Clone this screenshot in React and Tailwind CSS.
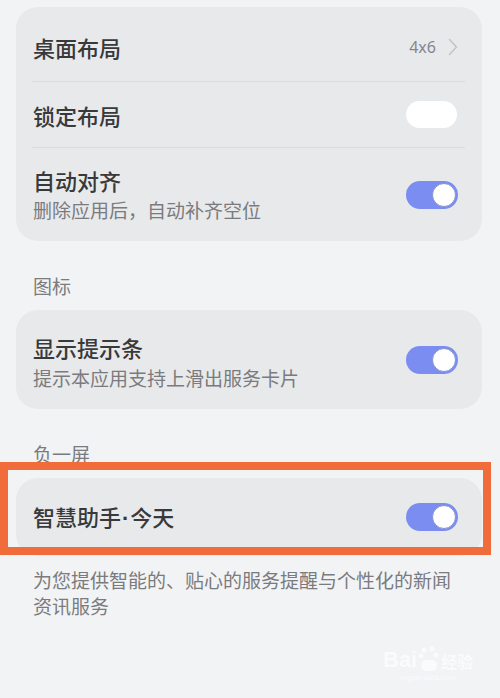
import React from 'react';

const Toggle = ({ on }) => {
    if (!on) {
        return <div className="w-[51px] h-[27px] rounded-full bg-white shrink-0" />;
    }
    return (
        <div className="w-[52px] h-[28px] rounded-full bg-[#7b8df1] flex items-center justify-end pr-[2px] shrink-0">
            <div className="w-[24px] h-[24px] rounded-full bg-white border border-[#8390cf]" />
        </div>
    );
};

const Divider = () => <div className="h-px bg-[#dadbde] ml-[16px] mr-[17px]" />;

const SectionLabel = ({ children }) => (
    <div className="mt-[32px] mb-[11px] px-[17px] text-[19px] leading-[26px] text-[#7a7b7e]">{children}</div>
);

const Title = ({ children }) => (
    <span className="text-[22px] leading-[30px] font-medium text-[#38393b]">{children}</span>
);

const App = () => {
    return (
        <div className="relative w-[500px] h-[698px] overflow-hidden bg-[#f2f3f5] font-['Noto_Sans_CJK_SC','Noto_Sans',sans-serif]">
            <div className="pt-[7px] px-[16px]">
                {/* 桌面 */}
                <div className="w-[466px] rounded-[22px] bg-[#e8e9eb] pt-[6px]">
                    <div className="h-[68px] flex items-center justify-between pl-[17px] pr-[24px]">
                        <Title>桌面布局</Title>
                        <div className="flex items-center gap-[12px]">
                            <span className="text-[16px] text-[#85878b] font-['Noto_Sans',sans-serif]">4x6</span>
                            <svg width="10" height="18" viewBox="0 0 10 18" fill="none">
                                <path d="M1.5 1.5 L8.5 9 L1.5 16.5" stroke="#c2c4c8" strokeWidth="1.6" strokeLinecap="round" strokeLinejoin="round" />
                            </svg>
                        </div>
                    </div>
                    <Divider />
                    <div className="h-[65px] flex items-center justify-between pl-[17px] pr-[25px]">
                        <Title>锁定布局</Title>
                        <Toggle on={false} />
                    </div>
                    <Divider />
                    <div className="h-[93px] flex items-center justify-between pl-[17px] pr-[24px]">
                        <div className="flex flex-col">
                            <Title>自动对齐</Title>
                            <span className="text-[19px] leading-[30px] text-[#7a7b7e]">删除应用后，自动补齐空位</span>
                        </div>
                        <Toggle on />
                    </div>
                </div>

                <SectionLabel>图标</SectionLabel>

                <div className="w-[466px] h-[99px] rounded-[22px] bg-[#e8e9eb] flex items-center justify-between pl-[17px] pr-[24px]">
                    <div className="flex flex-col mt-[6px]">
                        <Title>显示提示条</Title>
                        <span className="text-[19px] leading-[30px] text-[#7a7b7e] mt-[1px]">提示本应用支持上滑出服务卡片</span>
                    </div>
                    <Toggle on />
                </div>

                <SectionLabel>负一屏</SectionLabel>

                <div className="w-[466px] h-[78px] rounded-[22px] bg-[#e8e9eb] flex items-center justify-between pl-[17px] pr-[24px]">
                    <Title>
                        智慧助手<span className="font-['Liberation_Sans',sans-serif] font-bold px-[1px]">·</span>今天
                    </Title>
                    <Toggle on />
                </div>

                <p className="mt-[11px] px-[17px] text-[19px] leading-[26px] text-[#7a7b7e]">
                    为您提供智能的、贴心的服务提醒与个性化的新闻资讯服务
                </p>
            </div>

            {/* annotation box */}
            <div className="absolute left-0 top-[462px] w-[491px] h-[93px] border-[8px] border-[#f06c3a]" />

            {/* watermark */}
            <div className="absolute left-[383px] top-[645px] flex flex-col items-center opacity-70">
                <div className="flex items-end gap-[1px]">
                    <span className="text-[22px] leading-[26px] font-bold text-white font-['Liberation_Sans',sans-serif]">Bai</span>
                    <svg width="22" height="28" viewBox="0 0 22 28">
                        <circle cx="6" cy="5" r="2.5" fill="#ffffff" />
                        <circle cx="14" cy="4" r="2.5" fill="#ffffff" />
                        <circle cx="3" cy="11" r="2.5" fill="#ffffff" />
                        <circle cx="18" cy="10" r="2.5" fill="#ffffff" />
                        <rect x="3" y="15" width="16" height="11" rx="5" fill="#ffffff" />
                    </svg>
                    <span className="text-[16px] leading-[24px] font-bold text-white">经验</span>
                </div>
                <span className="text-[7px] leading-[10px] text-white font-['Liberation_Sans',sans-serif]">jingyan.baidu.com</span>
            </div>
        </div>
    );
};

export default App;
